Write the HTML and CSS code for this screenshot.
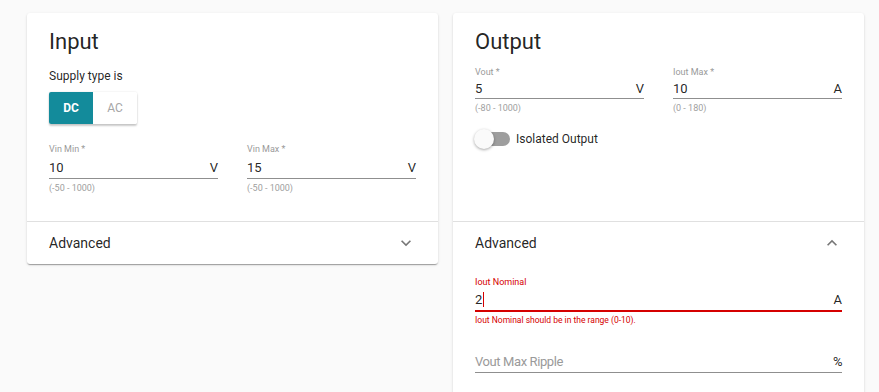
FILE: index.html
```html
<!DOCTYPE html>
<html lang="en">
<head>
  <meta charset="UTF-8">
  <meta name="viewport" content="width=device-width, initial-scale=1.0">
  <title>Power Supply Spec</title>
  <link rel="stylesheet" href="styles.css">
</head>
<body>
  <main class="page">
    <!-- Input card -->
    <section class="card">
      <div class="card-body">
        <h2 class="card-title">Input</h2>
        <p class="caption">Supply type is</p>
        <div class="toggle-group">
          <button type="button" class="toggle on">DC</button>
          <button type="button" class="toggle">AC</button>
        </div>
        <div class="field-row">
          <div class="field">
            <label class="field-label">Vin Min *</label>
            <div class="field-input"><span class="value">10</span><span class="suffix">V</span></div>
            <div class="hint">(-50 - 1000)</div>
          </div>
          <div class="field">
            <label class="field-label">Vin Max *</label>
            <div class="field-input"><span class="value">15</span><span class="suffix">V</span></div>
            <div class="hint">(-50 - 1000)</div>
          </div>
        </div>
      </div>
      <div class="panel-header">
        <span>Advanced</span>
        <svg class="chevron" viewBox="0 0 24 24"><path d="M16.59 8.59L12 13.17 7.41 8.59 6 10l6 6 6-6z"/></svg>
      </div>
    </section>

    <!-- Output card -->
    <section class="card">
      <div class="card-body">
        <h2 class="card-title">Output</h2>
        <div class="field-row tight">
          <div class="field">
            <label class="field-label">Vout *</label>
            <div class="field-input"><span class="value">5</span><span class="suffix">V</span></div>
            <div class="hint">(-80 - 1000)</div>
          </div>
          <div class="field">
            <label class="field-label">Iout Max *</label>
            <div class="field-input"><span class="value">10</span><span class="suffix">A</span></div>
            <div class="hint">(0 - 180)</div>
          </div>
        </div>
        <div class="switch-row">
          <span class="switch"><span class="thumb"></span></span>
          <span>Isolated Output</span>
        </div>
      </div>
      <div class="panel-header">
        <span>Advanced</span>
        <svg class="chevron" viewBox="0 0 24 24"><path d="M7.41 15.41L12 10.83l4.59 4.58L18 14l-6-6-6 6z"/></svg>
      </div>
      <div class="panel-body">
        <div class="field invalid">
          <label class="field-label">Iout Nominal</label>
          <div class="field-input"><span class="value">2<span class="caret"></span></span><span class="suffix">A</span></div>
          <div class="hint">Iout Nominal should be in the range (0-10).</div>
        </div>
        <div class="field empty">
          <label class="field-label"></label>
          <div class="field-input"><span class="value placeholder">Vout Max Ripple</span><span class="suffix">%</span></div>
        </div>
      </div>
    </section>
  </main>
</body>
</html>
```

FILE: styles.css
```css
* {
  margin: 0;
  padding: 0;
  box-sizing: border-box;
}

body {
  font-family: Roboto, 'Liberation Sans', sans-serif;
  background: #fafafa;
  color: rgba(0, 0, 0, 0.87);
  overflow: hidden;
}

.page {
  display: flex;
  align-items: flex-start;
  gap: 15px;
  padding: 13px 15px 0 27px;
}

.card {
  width: 411px;
  background: #fff;
  border-radius: 3px;
  box-shadow: 0 2px 1px -1px rgba(0, 0, 0, 0.2), 0 1px 1px 0 rgba(0, 0, 0, 0.14), 0 1px 3px 0 rgba(0, 0, 0, 0.12);
}

.card-body {
  min-height: 208px;
  padding: 15px 22px 0;
}

.card-title {
  font-size: 22px;
  font-weight: 400;
  line-height: 28px;
  margin-bottom: 12px;
}

.caption {
  font-size: 12px;
  line-height: 16px;
  margin-bottom: 8px;
}

.toggle-group {
  display: inline-flex;
  border-radius: 2px;
  overflow: hidden;
  box-shadow: 0 2px 2px rgba(0, 0, 0, 0.2), 0 0 2px rgba(0, 0, 0, 0.12);
  margin-bottom: 18px;
}

.toggle {
  width: 44px;
  height: 32px;
  border: none;
  background: #fff;
  color: #a6a6a6;
  font-family: inherit;
  font-size: 12px;
}

.toggle.on {
  background: #138b9b;
  color: #fff;
  font-weight: 700;
}

.field-row {
  display: flex;
  gap: 29px;
}

.card-title + .field-row {
  margin-top: -3px;
}

.field {
  flex: 1;
}

.field-label {
  display: block;
  height: 14px;
  font-size: 9px;
  line-height: 14px;
  color: #9a9a9a;
}

.field-input {
  display: flex;
  justify-content: space-between;
  align-items: center;
  height: 23px;
  font-size: 13px;
  border-bottom: 1px solid #8f8f8f;
}

.tight .field-input {
  height: 20px;
}

.hint {
  font-size: 9px;
  line-height: 14px;
  margin-top: 2px;
  color: #a0a0a0;
}

.switch-row {
  display: flex;
  align-items: center;
  gap: 6px;
  margin-top: 17px;
  font-size: 12px;
}

.switch {
  position: relative;
  width: 34px;
  height: 14px;
  margin-left: 1px;
  border-radius: 7px;
  background: #9e9e9e;
}

.thumb {
  position: absolute;
  left: -2px;
  top: -3px;
  width: 20px;
  height: 20px;
  border-radius: 50%;
  background: #fafafa;
  box-shadow: 0 1px 3px rgba(0, 0, 0, 0.35);
}

.panel-header {
  display: flex;
  justify-content: space-between;
  align-items: center;
  height: 43px;
  padding: 0 22px;
  border-top: 1px solid #e0e0e0;
  font-size: 14px;
}

.chevron {
  width: 20px;
  height: 20px;
  fill: #777;
}

.panel-body {
  padding: 11px 22px 40px;
}

.invalid .field-label,
.invalid .hint {
  color: #d50000;
}

.invalid .hint {
  font-size: 8.5px;
  margin-top: 1px;
}

.invalid .field-input {
  height: 23px;
  border-bottom: 2px solid #d50000;
}

.caret {
  display: inline-block;
  width: 1px;
  height: 15px;
  margin-left: 1px;
  vertical-align: -3px;
  background: #d50000;
}

.empty {
  margin-top: 9px;
}

.empty .field-input {
  font-size: 13px;
  letter-spacing: -0.4px;
}

.placeholder {
  color: #9a9a9a;
}
```
